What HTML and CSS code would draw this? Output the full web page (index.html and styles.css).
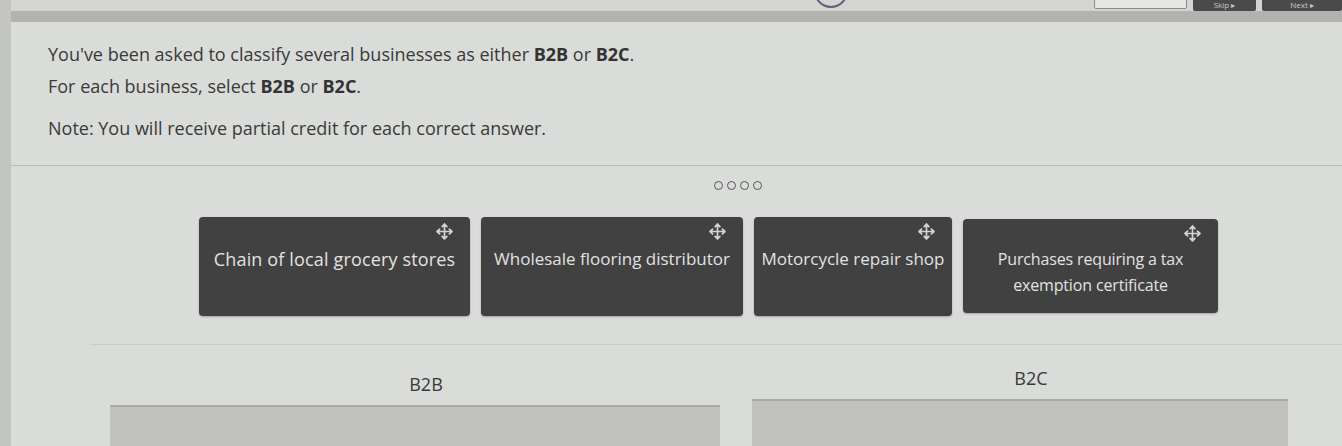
FILE: index.html
```html
<!DOCTYPE html>
<html lang="en">
<head>
<meta charset="utf-8">
<title>Classify businesses</title>
<link rel="stylesheet" href="styles.css">
</head>
<body>
<div class="frame">
  <div class="side"></div>
  <div class="main">
    <header class="topbar">
      <div class="top-inner">
        <span class="ring"></span>
        <span class="top-spacer"></span>
        <span class="field"></span>
        <span class="btn skip">Skip ▸</span>
        <span class="btn next">Next ▸</span>
      </div>
      <div class="band"></div>
    </header>
    <section class="prompt">
      <p>You've been asked to classify several businesses as either <b>B2B</b> or <b>B2C</b>.</p>
      <p>For each business, select <b>B2B</b> or <b>B2C</b>.</p>
      <p>Note: You will receive partial credit for each correct answer.</p>
    </section>
    <section class="work">
      <div class="dots">
        <span class="dot"></span><span class="dot"></span><span class="dot"></span><span class="dot"></span>
      </div>
      <div class="cards">
        <div class="card c1"><svg class="move" viewBox="0 0 16 16"><path d="M8 1v14M1 8h14M8 1l-2.2 2.4M8 1l2.2 2.4M8 15l-2.2-2.4M8 15l2.2-2.4M1 8l2.4-2.2M1 8l2.4 2.2M15 8l-2.4-2.2M15 8l-2.4 2.2"/></svg><span>Chain of local grocery stores</span></div>
        <div class="card c2"><svg class="move" viewBox="0 0 16 16"><path d="M8 1v14M1 8h14M8 1l-2.2 2.4M8 1l2.2 2.4M8 15l-2.2-2.4M8 15l2.2-2.4M1 8l2.4-2.2M1 8l2.4 2.2M15 8l-2.4-2.2M15 8l-2.4 2.2"/></svg><span>Wholesale flooring distributor</span></div>
        <div class="card c3"><svg class="move" viewBox="0 0 16 16"><path d="M8 1v14M1 8h14M8 1l-2.2 2.4M8 1l2.2 2.4M8 15l-2.2-2.4M8 15l2.2-2.4M1 8l2.4-2.2M1 8l2.4 2.2M15 8l-2.4-2.2M15 8l-2.4 2.2"/></svg><span>Motorcycle repair shop</span></div>
        <div class="card c4 small"><svg class="move" viewBox="0 0 16 16"><path d="M8 1v14M1 8h14M8 1l-2.2 2.4M8 1l2.2 2.4M8 15l-2.2-2.4M8 15l2.2-2.4M1 8l2.4-2.2M1 8l2.4 2.2M15 8l-2.4-2.2M15 8l-2.4 2.2"/></svg><span>Purchases requiring a tax<br>exemption certificate</span></div>
      </div>
      <div class="rule"></div>
      <div class="zones">
        <div class="zone z1">
          <div class="zlabel">B2B</div>
          <div class="drop"></div>
        </div>
        <div class="zone z2">
          <div class="zlabel">B2C</div>
          <div class="drop"></div>
        </div>
      </div>
    </section>
  </div>
</div>
</body>
</html>
```
FILE: styles.css
```css
* { box-sizing: border-box; }
html, body { margin: 0; padding: 0; }
body {
  width: 1342px;
  height: 446px;
  overflow: hidden;
  background: #d9dcd8;
  font-family: "Open Sans", "Liberation Sans", sans-serif;
  color: #3a3a3a;
}
.frame { display: flex; height: 446px; overflow: hidden; }
.side { width: 11px; flex: none; background: #c3c5c2; }
.main { flex: 1; display: flex; flex-direction: column; }

.topbar { display: flex; flex-direction: column; }
.top-inner {
  height: 11px;
  display: flex;
  align-items: flex-end;
  overflow: hidden;
  background: #d4d5d2;
}
.ring {
  width: 34px; height: 34px;
  margin-left: 803px;
  margin-bottom: 3px;
  border: 2px solid #5a6478;
  border-radius: 50%;
  flex: none;
}
.top-spacer { flex: 1; }
.field {
  width: 93px; height: 20px;
  margin-bottom: 2px;
  border: 1px solid #8a8a88;
  background: #e6e6e4;
  border-radius: 2px;
}
.btn {
  height: 11px;
  margin-left: 6px;
  background: #4a4a4a;
  color: #c9c9c9;
  font-size: 8px;
  line-height: 9px;
  display: flex;
  justify-content: center;
  align-items: flex-start;
  border-radius: 0 0 2px 2px;
}
.skip { width: 63px; }
.next { width: 80px; }
.band { height: 11px; background: #b2b3b0; }

.prompt { padding: 20px 0 0 37px; }
.prompt p {
  margin: 0 0 8px;
  font-size: 18px;
  line-height: 24px;
  letter-spacing: 0;
}
.prompt p:nth-child(2) { margin-bottom: 18px; }
.prompt b { font-weight: 700; color: #333; }

.work {
  margin-top: 17px;
  border-top: 1px solid #b9bcb8;
  display: flex;
  flex-direction: column;
}
.dots {
  display: flex;
  gap: 4px;
  padding: 15px 0 0 703px;
  height: 30px;
}
.dot {
  width: 9px; height: 9px;
  border: 1.5px solid #555;
  border-radius: 50%;
}
.cards {
  display: flex;
  gap: 11px;
  padding-left: 188px;
  margin-top: 21px;
}
.card {
  position: relative;
  height: 99px;
  background: #414141;
  border-radius: 4px;
  color: #e2e2e2;
  font-size: 17px;
  letter-spacing: 0;
  line-height: 26px;
  display: flex;
  align-items: center;
  justify-content: center;
  text-align: center;
  padding: 0 4px 16px;
  white-space: nowrap;
  box-shadow: 0 1px 2px rgba(0,0,0,0.25);
}
.c1 { width: 271px; font-size: 18px; letter-spacing: 0.15px; }
.c2 { width: 262px; }
.c3 { width: 198px; }
.c4 { width: 255px; padding-bottom: 0; height: 94px; margin-top: 2px; padding-top: 12px; }
.small { font-size: 16px; letter-spacing: -0.15px; }
.move {
  position: absolute;
  top: 6px; right: 17px;
  width: 17px; height: 17px;
  fill: none;
  stroke: #d4d4d4;
  stroke-width: 1.6;
  stroke-linecap: round;
}

.rule {
  margin: 28px 0 0 79px;
  border-top: 1px solid #c9ccc8;
}
.zones {
  display: flex;
  gap: 32px;
  padding-left: 99px;
  margin-top: 27px;
}
.zone { display: flex; flex-direction: column; }
.z1 { width: 610px; }
.z2 { width: 536px; margin-top: -6px; }
.zlabel {
  text-align: center;
  font-size: 18px;
  line-height: 24px;
  padding-left: 22px;
  color: #3a3a3a;
}
.drop {
  margin-top: 9px;
  height: 60px;
  background: #c1c2bf;
  border-top: 2px solid #a9aaa7;
}
```
